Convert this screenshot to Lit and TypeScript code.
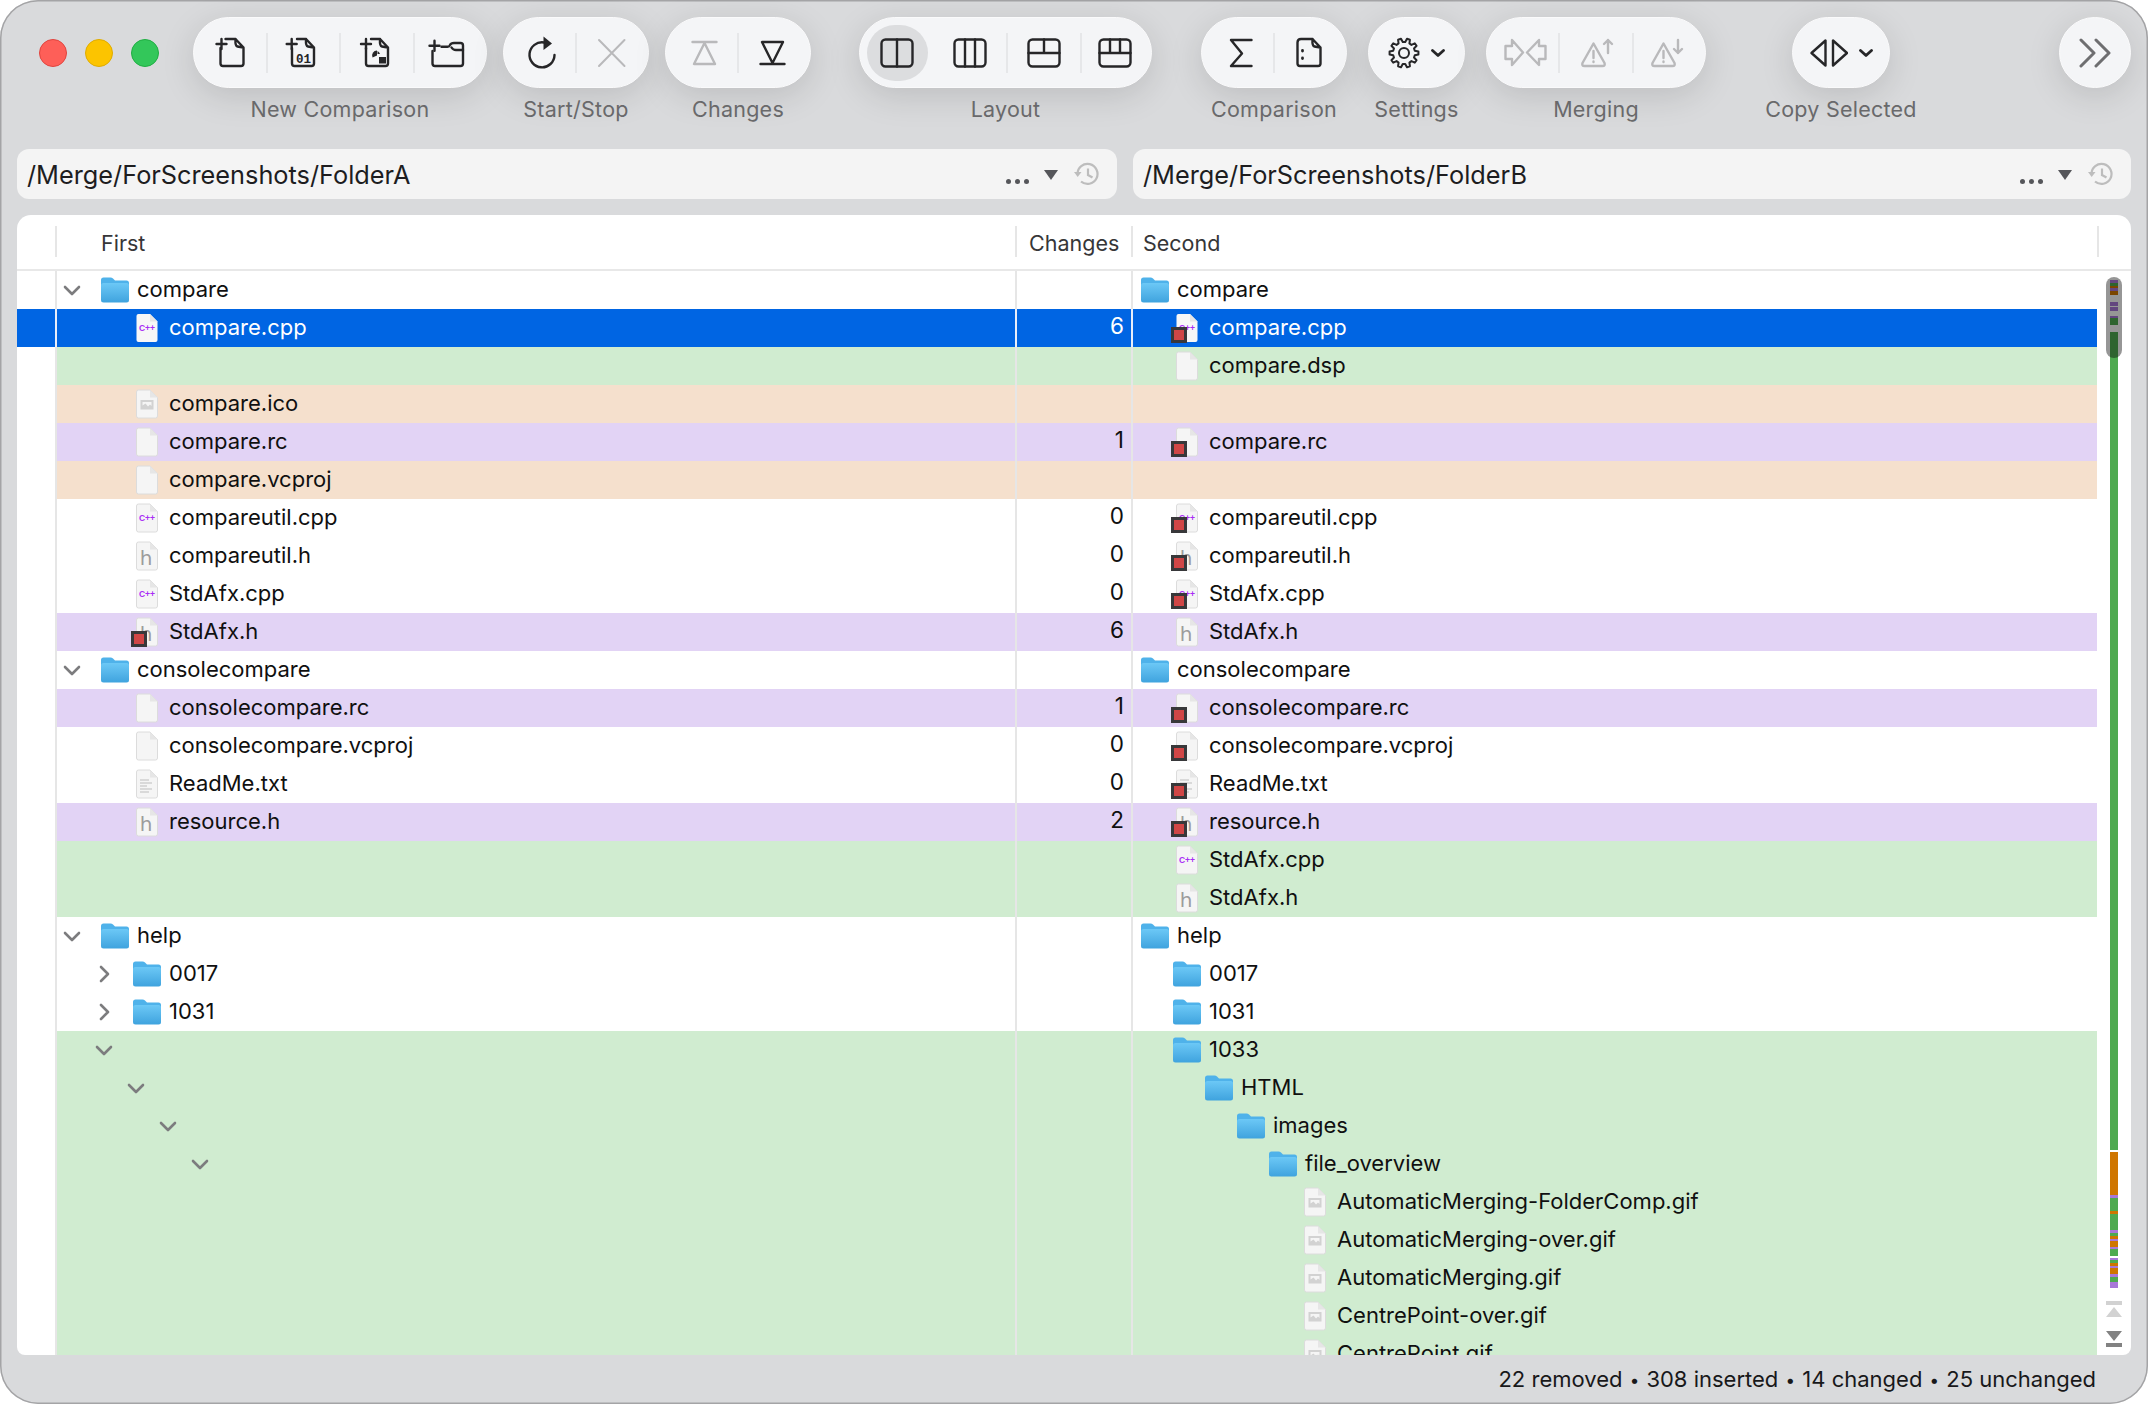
import { LitElement, html, svg, css } from 'lit';
import { customElement } from 'lit/decorators.js';

type Tint = '' | 'sel' | 'add' | 'del' | 'chg';
type Kind = 'folder' | 'cpp' | 'h' | 'img' | 'blank' | 'txt';

interface Side {
  name?: string;
  depth: number;
  kind?: Kind;
  badge?: boolean;
  chev?: 'down' | 'right';
}

interface Row {
  tint: Tint;
  left?: Side;
  count?: string;
  right?: Side;
}

const file = (name: string, kind: Kind, badge = false, depth = 1): Side => ({ name, kind, badge, depth });
const dir = (name: string, depth: number, chev?: 'down' | 'right'): Side => ({ name, kind: 'folder', depth, chev });

const rows: Row[] = [
  { tint: '', left: dir('compare', 0, 'down'), right: dir('compare', 0) },
  { tint: 'sel', left: file('compare.cpp', 'cpp'), count: '6', right: file('compare.cpp', 'cpp', true) },
  { tint: 'add', right: file('compare.dsp', 'blank') },
  { tint: 'del', left: file('compare.ico', 'img') },
  { tint: 'chg', left: file('compare.rc', 'blank'), count: '1', right: file('compare.rc', 'blank', true) },
  { tint: 'del', left: file('compare.vcproj', 'blank') },
  { tint: '', left: file('compareutil.cpp', 'cpp'), count: '0', right: file('compareutil.cpp', 'cpp', true) },
  { tint: '', left: file('compareutil.h', 'h'), count: '0', right: file('compareutil.h', 'h', true) },
  { tint: '', left: file('StdAfx.cpp', 'cpp'), count: '0', right: file('StdAfx.cpp', 'cpp', true) },
  { tint: 'chg', left: file('StdAfx.h', 'h', true), count: '6', right: file('StdAfx.h', 'h') },
  { tint: '', left: dir('consolecompare', 0, 'down'), right: dir('consolecompare', 0) },
  { tint: 'chg', left: file('consolecompare.rc', 'blank'), count: '1', right: file('consolecompare.rc', 'blank', true) },
  { tint: '', left: file('consolecompare.vcproj', 'blank'), count: '0', right: file('consolecompare.vcproj', 'blank', true) },
  { tint: '', left: file('ReadMe.txt', 'txt'), count: '0', right: file('ReadMe.txt', 'txt', true) },
  { tint: 'chg', left: file('resource.h', 'h'), count: '2', right: file('resource.h', 'h', true) },
  { tint: 'add', right: file('StdAfx.cpp', 'cpp') },
  { tint: 'add', right: file('StdAfx.h', 'h') },
  { tint: '', left: dir('help', 0, 'down'), right: dir('help', 0) },
  { tint: '', left: dir('0017', 1, 'right'), right: dir('0017', 1) },
  { tint: '', left: dir('1031', 1, 'right'), right: dir('1031', 1) },
  { tint: 'add', left: { depth: 1, chev: 'down' }, right: dir('1033', 1) },
  { tint: 'add', left: { depth: 2, chev: 'down' }, right: dir('HTML', 2) },
  { tint: 'add', left: { depth: 3, chev: 'down' }, right: dir('images', 3) },
  { tint: 'add', left: { depth: 4, chev: 'down' }, right: dir('file_overview', 4) },
  { tint: 'add', right: file('AutomaticMerging-FolderComp.gif', 'img', false, 5) },
  { tint: 'add', right: file('AutomaticMerging-over.gif', 'img', false, 5) },
  { tint: 'add', right: file('AutomaticMerging.gif', 'img', false, 5) },
  { tint: 'add', right: file('CentrePoint-over.gif', 'img', false, 5) },
  { tint: 'add', right: file('CentrePoint.gif', 'img', false, 5) },
];

// overview strip, heights in px from top of the strip
const strip: [string, number][] = [
  ['p', 3], ['g', 3], ['o', 2], ['p', 3], ['o', 4], ['', 7], ['p', 4], ['', 1], ['p', 4], ['', 5], ['p', 2], ['g', 7], ['', 7],
  ['g', 818], ['', 2], ['o', 43], ['p', 3], ['g', 13], ['o', 3], ['g', 16], ['p', 3], ['g', 3], ['o', 3], ['p', 2], ['o', 6],
  ['p', 2], ['g', 7], ['', 2], ['p', 2], ['g', 3], ['o', 3], ['p', 2], ['o', 6], ['p', 3], ['g', 5], ['p', 6],
];

const docPath = (l: number, r: number) =>
  `M${l} 15V30.5Q${l} 33 ${l + 2.5} 33H${r - 2.5}Q${r} 33 ${r} 30.5V14.500L${r - 8} 6H${l + 5}M${r - 8} 6Q${r - 8.500} 13 ${r - 6} 13.500T${r} 14.500`;
const plus = (x: number, y: number) => svg`<path d="M${x - 5} ${y}H${x + 5}M${x} ${y - 5}V${y + 5}" />`;

function gearPath(cx: number, cy: number, teeth: number, outer: number, inner: number) {
  let d = '';
  const step = (Math.PI * 2) / teeth;
  for (let i = 0; i < teeth; i++) {
    const a = i * step;
    const pts: [number, number][] = [
      [inner, a - step * 0.32],
      [outer, a - step * 0.17],
      [outer, a + step * 0.17],
      [inner, a + step * 0.32],
    ];
    pts.forEach(([r, t], j) => {
      const x = (cx + Math.cos(t) * r).toFixed(2);
      const y = (cy + Math.sin(t) * r).toFixed(2);
      d += `${i === 0 && j === 0 ? 'M' : 'L'}${x} ${y}`;
    });
  }
  return d + 'Z';
}

const warn = (x: number, flip: boolean) => svg`
  <g transform="translate(${x} 0)">
    <path d="M17.500 10.500L28.500 30Q29.500 33 26.500 33H8.500Q5.500 33 6.500 30Z" />
    <path d="M17.500 18V25M17.500 28.500V29" />
    ${flip
      ? svg`<path d="M32 7V20M28 16L32 20L36 16" />`
      : svg`<path d="M32 20V7M28 11L32 7L36 11" />`}
  </g>`;

const rect = svg`<rect x="4.500" y="6.500" width="31" height="27" rx="4" />`;

const icons: Record<string, unknown> = {
  newDoc: svg`<path d=${docPath(10.5, 33.5)} />${plus(11.5, 11)}`,
  newBin: svg`<path d=${docPath(9, 31)} />${plus(8.7, 11)}<text x="20.500" y="29.500" class="bits">01</text>`,
  newImg: svg`<path d=${docPath(9, 31)} />${plus(9, 11)}
    <path class="solid" stroke="none" d="M20 22.500V17.500A5 5 0 0 0 15.500 24.500Z" />
    <path class="solid" stroke="none" d="M20.500 18a5 5 0 0 1 2.500 3H20.500Z" />
    <rect class="solid" stroke="none" x="22" y="24" width="7" height="6.500" />`,
  newDir: svg`<path d="M2.500 18V30.500Q2.500 33 5 33H30.500Q33 33 33 30.500V12.500Q33 10 30.500 10H24Q21 10 20 12Q19.500 13.700 17.500 13.700H11.500" />
    <path d="M21.500 14.500Q23 17 26 17H33" />${plus(4.5, 12.7)}`,
  restart: svg`<path d="M24 9.500A12.500 12.500 0 1 0 34.500 22" /><path class="solid" stroke="none" d="M23.500 3.500L32 10.500L23.500 17Z" />`,
  stop: svg`<path class="thin" d="M6 7L31.500 33M31.500 7L6 33" />`,
  up: svg`<path d="M10.500 9H34.500M22.500 10L12 31H33Z" />`,
  down: svg`<path d="M5.500 31H29.500M17.500 30L7 9H28Z" />`,
  lay1: svg`${rect}<path d="M20 6.500V33.500" />`,
  lay2: svg`${rect}<path d="M15 6.500V33.500M25 6.500V33.500" />`,
  lay3: svg`${rect}<path d="M4.500 20H35.500M20 6.500V20" />`,
  lay4: svg`${rect}<path d="M4.500 20H35.500M15 6.500V20M25 6.500V20" />`,
  sigma: svg`<path d="M33.500 7H13L24 20.500L13 33H33.500" />`,
  docDots: svg`<path d="M6.500 9.500V30.500Q6.500 33 9 33H27Q29.500 33 29.500 30.500V14.500L21.500 6H10Q6.500 6 6.500 9.500ZM21.500 6Q21 13 23.500 13.500T29.500 14.500" />
    <path class="dot" d="M11.500 17.500V18M11.500 25V25.500" />`,
  merge: svg`<path d="M5.500 13H12V7L23 19.500L12 32V26H5.500Z M45.500 13H39V7L27 19.500L39 32V26H45.500Z" />`,
  warnUp: warn(0, false),
  warnDown: warn(-3, true),
};

const ctlChevron = html`<svg class="ctl-chev" viewBox="0 0 14 8"><path d="M1.500 1.500L7 6.500L12.500 1.500" /></svg>`;
const ic = (name: string, width = 40) =>
  html`<svg class="ic" width=${width} height="40" viewBox="0 0 ${width} 40">${icons[name]}</svg>`;

interface Group {
  label: string;
  width: number;
  cells: string[];
  off?: boolean[];
}

@customElement('tool-group')
class ToolGroup extends LitElement {
  static properties = { label: {}, width: { type: Number } };
  label = '';
  width = 0;

  static styles = css`
    :host { display: flex; flex-direction: column; align-items: center; }
    .pill {
      display: flex; align-items: center; height: 71px; box-sizing: border-box;
      border-radius: 36px; background: #f4f5f7; border: 1px solid #fafafb;
      box-shadow: 0 8px 34px rgba(0, 0, 0, 0.13);
    }
    .label {
      margin: 8px -30px 0; height: 26px; white-space: nowrap; letter-spacing: 0.25px;
      font: 21.5px/26px Inter, "Liberation Sans", sans-serif; color: #69696b;
    }
  `;

  render() {
    return html`
      <div class="pill" style="width:${this.width}px"><slot></slot></div>
      ${this.label ? html`<div class="label">${this.label}</div>` : ''}
    `;
  }
}

@customElement('path-field')
class PathField extends LitElement {
  static properties = { value: {} };
  value = '';

  static styles = css`
    :host {
      flex: 1; display: flex; align-items: center; height: 50px; border-radius: 12px;
      background: #f4f4f4; padding: 0 18px 0 10px; box-sizing: border-box;
      font: 25.3px Inter, "Liberation Sans", sans-serif; color: #1d1d1f;
    }
    .v { flex: 1; }
    .dots { display: flex; gap: 4px; margin-right: 15px; padding-top: 14px; }
    .dots i { width: 5px; height: 5px; border-radius: 50%; background: #55565a; }
    .tri { width: 14px; height: 10px; margin-right: 16px; margin-top: 2px; background: #55565a; clip-path: polygon(0 0, 100% 0, 50% 100%); }
    svg { display: block; fill: none; stroke: #bdbdbd; stroke-width: 2.2; }
  `;

  render() {
    return html`
      <span class="v">${this.value}</span>
      <span class="dots"><i></i><i></i><i></i></span>
      <span class="tri"></span>
      <svg width="25" height="24" viewBox="0 0 25 24">
        <path d="M3.500 12A10 10 0 1 1 7 19.500" />
        <path d="M14 6.500V13L18.500 15.500" />
        <path fill="#bdbdbd" stroke="none" d="M0 10H7.500L3.700 15Z" />
      </svg>
    `;
  }
}

@customElement('app-root')
export class AppRoot extends LitElement {
  static styles = css`
    :host { display: block; }
    .window {
      display: flex; flex-direction: column; height: 1404px; box-sizing: border-box; overflow: hidden;
      border-radius: 38px; background: #d9dadc; box-shadow: inset 0 0 0 1.5px #a4a4a6;
      font-family: Inter, "Liberation Sans", sans-serif;
    }

    /* toolbar */
    .toolbar { display: flex; height: 149px; box-sizing: border-box; padding: 17px 0 0 28px; }
    .lights { display: flex; gap: 18px; height: 71px; align-items: center; margin: 0 34px 0 11px; }
    .lights i { width: 28px; height: 28px; border-radius: 50%; box-sizing: border-box; }
    .r { background: #fe5f58; border: 1px solid #e0443e; }
    .y { background: #fcc400; border: 1px solid #e0ac00; }
    .g { background: #33c75a; border: 1px solid #1fae42; }
    .cluster { display: flex; gap: 16px; }
    .cluster.wide { gap: 21px; margin-left: 49px; }
    .lay { margin-left: 48px; }
    .copy { margin-left: 86px; }
    .more { margin-left: 169px; }

    .cell { flex: 1; display: flex; align-items: center; justify-content: center; gap: 11px; height: 100%; min-width: 0; }
    .cell.l1 { flex: none; width: 74px; }
    .cell.l2 { flex: none; width: 72px; }
    .cell.l3 { flex: none; width: 72px; }
    .cell.l4 { padding-right: 3px; }
    .on-bg { width: 61px; height: 56px; border-radius: 28px; background: #dcdddf; display: flex; align-items: center; justify-content: center; }
    .sep { width: 2px; height: 40px; background: #e6e7e9; flex: none; }
    .ic { display: block; overflow: visible; fill: none; stroke: #262628; stroke-width: 2.4; stroke-linejoin: round; stroke-linecap: round; flex: none; }
    .ic .solid { fill: #262628; }
    .ic .bits { font: bold 12.5px "Liberation Mono", monospace; fill: #262628; stroke: none; text-anchor: middle; }
    .ic .dot { stroke-width: 2.8; }
    .ic .thin { stroke-width: 2; }
    .off .ic { stroke: #b9b9bb; }
    .ctl-chev { display: block; width: 14px; height: 8px; fill: none; stroke: #262628; stroke-width: 2.8; stroke-linecap: round; stroke-linejoin: round; }
    .gear { display: block; fill: none; stroke: #262628; stroke-width: 2; stroke-linejoin: round; }
    .tris { display: block; fill: none; stroke: #262628; stroke-width: 2.4; stroke-linejoin: round; }
    .twin { display: block; fill: none; stroke: #6e6e70; stroke-width: 3; stroke-linecap: round; stroke-linejoin: round; }

    /* path fields */
    .paths { display: flex; gap: 16px; padding: 0 17px; }
    .paths .first { flex: none; width: 1100px; }

    /* table */
    .table {
      flex: 1; min-height: 0; margin: 16px 17px 0; display: flex; flex-direction: column;
      background: #fff; border-radius: 14px 14px 8px 8px; overflow: hidden;
    }
    .head {
      flex: none; height: 56px; box-sizing: border-box; display: grid; align-items: center;
      grid-template-columns: 38px 2px 958px 2px 114px 2px 964px 2px 1fr;
      font-size: 21.5px; color: #363638; border-bottom: 2px solid #e8e8e8;
      padding-bottom: 1px;
    }
    .head i { height: 31px; background: #e6e6e6; }
    .head span { padding-top: 2px; }
    .head span:nth-of-type(1) { padding-left: 44px; }
    .head span:nth-of-type(2) { padding-left: 12px; }
    .head span:nth-of-type(3) { padding-left: 10px; }
    .body { flex: 1; min-height: 0; display: flex; }
    .rows { flex: 1; min-width: 0; overflow: hidden; }
    .row {
      display: grid; height: 38px; grid-template-columns: 38px 2px 958px 2px 114px 2px 1fr;
      font-size: 22px; color: #101010;
    }
    .row > i { background: #e6e6e6; }
    .row.sel { color: #fff; }
    .row.sel > .gut { background: #0065e3; }
    .row.sel > i { background: #e8eefa; }
    .sel > .c { background: #0065e3; }
    .add > .c { background: #d0ecd0; }
    .del > .c { background: #f5e0cd; }
    .chg > .c { background: #e2d3f5; }
    .c { display: flex; align-items: center; white-space: nowrap; min-width: 0; }
    .name { margin-bottom: 2px; }
    .count { justify-content: flex-end; padding: 0 7px 5px 0; font-size: 22.5px; box-sizing: border-box; }
    .chev { width: 28px; flex: none; margin-right: 15px; display: flex; justify-content: center; }
    .chev svg { display: block; fill: none; stroke: #7c7c7e; stroke-width: 2.6; stroke-linecap: round; stroke-linejoin: round; }
    .slot { position: relative; width: 28px; height: 28px; flex: none; margin-right: 8px; display: flex; justify-content: center; align-items: center; }
    .badge {
      position: absolute; left: -2px; top: 13px; width: 16px; height: 16px; box-sizing: border-box;
      background: #d04646; border: 3px solid #38383a;
    }
    .page { display: block; flex: none; }
    .page .sheet { fill: #f5f5f5; stroke: #dcdcdc; stroke-width: 1; }
    .page .fold { fill: #e6e6e6; }
    .sel .page .sheet { fill: #f7f7f7; stroke: none; }
    .page .cpp { font: bold 8.5px "Liberation Sans", sans-serif; fill: #a92cf5; text-anchor: middle; }
    .page .hh { font: 20px "DejaVu Sans", sans-serif; fill: #9c9c9c; text-anchor: middle; }
    .page .pic { fill: #d2d2d2; }
    .page .line { stroke: #bdbdbd; stroke-width: 1; }

    /* overview */
    .side { flex: none; width: 34px; display: flex; flex-direction: column; align-items: center; padding-top: 9px; position: relative; }
    .strip { width: 8px; display: flex; flex-direction: column; }
    .strip b { display: block; }
    .strip .g { background: #4eaa50; border: 0; }
    .strip .o { background: #cf7600; }
    .strip .p { background: #a878d8; }
    .thumb { position: absolute; left: 9px; top: 6px; width: 16px; height: 81px; border-radius: 8px; background: rgba(0, 0, 0, 0.41); }
    .ends { margin-top: 13px; display: flex; flex-direction: column; gap: 14px; }
    .ends svg { display: block; }

    .status {
      flex: none; height: 49px; line-height: 49px; padding-right: 52px; text-align: right;
      font-size: 22px; color: #18181a;
    }
    .status b { font-weight: 400; font-size: 17px; margin: 0 1px; vertical-align: 1px; }
  `;

  private pageIcon(kind: Kind) {
    return html`<svg class="page" width="24" height="30" viewBox="0 0 24 30">
      <path class="sheet" d="M1.500 3Q1.500 1 3.500 1H15L22.500 8.500V27Q22.500 29 20.500 29H3.500Q1.500 29 1.500 27Z" />
      <path class="fold" d="M15 1L22.500 8.500H15Z" />
      ${kind === 'cpp' ? svg`<text class="cpp" x="12" y="18">C++</text>` : ''}
      ${kind === 'h' ? svg`<text class="hh" x="11" y="24">h</text>` : ''}
      ${kind === 'img'
        ? svg`<path class="pic" d="M5.500 11H18.500V20.500H5.500ZM7.500 13V16.500L10.500 14.500L13 17.500L15 15.500L16.500 17V13Z" fill-rule="evenodd" />`
        : ''}
      ${kind === 'txt'
        ? svg`<path class="line" d="M5 11H14M5 14H17M5 17H12M5 20H17M5 23H14" />`
        : ''}
    </svg>`;
  }

  private folderIcon() {
    return html`<svg class="page" width="28" height="26" viewBox="0 0 28 26">
      <defs>
        <linearGradient id="fg" x1="0" y1="0" x2="0" y2="1">
          <stop offset="0" stop-color="#6cc8f6" /><stop offset="1" stop-color="#3fa3de" />
        </linearGradient>
      </defs>
      <path fill="#4fb2ea" d="M0 3Q0 .5 2.500 .5H9.500Q11 .5 12 1.500L14 3.500H25.500Q28 3.500 28 6V10H0Z" />
      <path fill="url(#fg)" d="M0 8.500Q0 6 2.500 6H25.500Q28 6 28 8.500V23Q28 25.500 25.500 25.500H2.500Q0 25.500 0 23Z" />
    </svg>`;
  }

  private cell(side: Side | undefined, base: number, withChevrons: boolean) {
    if (!side) return html`<div class="c"></div>`;
    const pad = base + side.depth * 32;
    return html`<div class="c" style="padding-left:${pad}px">
      ${withChevrons
        ? html`<span class="chev">
            ${side.chev === 'down'
              ? html`<svg width="18" height="11" viewBox="0 0 18 11"><path d="M2 2L9 9L16 2" /></svg>`
              : side.chev === 'right'
                ? html`<svg width="11" height="18" viewBox="0 0 11 18"><path d="M2 2L9 9L2 16" /></svg>`
                : ''}
          </span>`
        : ''}
      ${side.kind
        ? html`<span class="slot">
            ${side.kind === 'folder' ? this.folderIcon() : this.pageIcon(side.kind)}
            ${side.badge ? html`<span class="badge"></span>` : ''}
          </span>`
        : ''}
      ${side.name ? html`<span class="name">${side.name}</span>` : ''}
    </div>`;
  }

  private group(g: Group) {
    return html`<tool-group .label=${g.label} .width=${g.width}>
      ${g.cells.map(
        (c, i) => html`
          ${i > 0 ? html`<span class="sep"></span>` : ''}
          <span class="cell ${g.off?.[i] ? 'off' : ''}">${ic(c, c === 'merge' ? 46 : 40)}</span>
        `,
      )}
    </tool-group>`;
  }

  render() {
    return html`
      <div class="window">
        <div class="toolbar">
          <div class="lights"><i class="r"></i><i class="y"></i><i class="g"></i></div>
          <div class="cluster">
            ${this.group({ label: 'New Comparison', width: 294, cells: ['newDoc', 'newBin', 'newImg', 'newDir'] })}
            ${this.group({ label: 'Start/Stop', width: 146, cells: ['restart', 'stop'], off: [false, true] })}
            ${this.group({ label: 'Changes', width: 146, cells: ['up', 'down'], off: [true, false] })}
          </div>
          <div class="lay">
            <tool-group .label=${'Layout'} .width=${293}>
              <span class="cell l1"><span class="on-bg">${ic('lay1')}</span></span>
              <span class="cell l2">${ic('lay2')}</span>
              <span class="sep"></span>
              <span class="cell l3">${ic('lay3')}</span>
              <span class="sep"></span>
              <span class="cell l4">${ic('lay4')}</span>
            </tool-group>
          </div>
          <div class="cluster wide">
            ${this.group({ label: 'Comparison', width: 146, cells: ['sigma', 'docDots'] })}
            <tool-group .label=${'Settings'} .width=${97}>
              <span class="cell">
                <svg class="gear" width="32" height="32" viewBox="0 0 32 32">
                  <path d=${gearPath(16, 16, 10, 14.5, 11)} /><circle cx="16" cy="16" r="5" />
                </svg>
                ${ctlChevron}
              </span>
            </tool-group>
            ${this.group({ label: 'Merging', width: 220, cells: ['merge', 'warnUp', 'warnDown'], off: [true, true, true] })}
          </div>
          <div class="copy">
            <tool-group .label=${'Copy Selected'} .width=${98}>
              <span class="cell">
                <svg class="tris" width="38" height="28" viewBox="0 0 38 28">
                  <path d="M15.500 1.500V26.500L1.500 14Z" /><path d="M23 1.500V26.500L37 14Z" />
                </svg>
                ${ctlChevron}
              </span>
            </tool-group>
          </div>
          <div class="more">
            <tool-group .width=${72}>
              <span class="cell">
                <svg class="twin" width="32" height="30" viewBox="0 0 32 30">
                  <path d="M2 2L15 15L2 28M17 2L30 15L17 28" />
                </svg>
              </span>
            </tool-group>
          </div>
        </div>

        <div class="paths">
          <path-field class="first" .value=${'/Merge/ForScreenshots/FolderA'}></path-field>
          <path-field .value=${'/Merge/ForScreenshots/FolderB'}></path-field>
        </div>

        <div class="table">
          <div class="head">
            <div></div><i></i><span>First</span><i></i><span>Changes</span><i></i><span>Second</span><i></i><div></div>
          </div>
          <div class="body">
            <div class="rows">
              ${rows.map(
                (r) => html`<div class="row ${r.tint}">
                  <div class="gut"></div><i></i>
                  ${this.cell(r.left, 1, true)}
                  <i></i>
                  <div class="c count">${r.count ?? ''}</div>
                  <i></i>
                  ${this.cell(r.right, 8, false)}
                </div>`,
              )}
            </div>
            <div class="side">
              <div class="strip">
                ${strip.map(([cls, h]) => html`<b class=${cls} style="height:${h}px"></b>`)}
              </div>
              <div class="thumb"></div>
              <div class="ends">
                <svg width="16" height="16" viewBox="0 0 16 16" fill="#d2d2d2"><path d="M0 0H16V4H0ZM8 6L16 16H0Z" /></svg>
                <svg width="16" height="16" viewBox="0 0 16 16" fill="#828282"><path d="M0 0H16L8 10ZM0 12H16V16H0Z" /></svg>
              </div>
            </div>
          </div>
        </div>

        <div class="status">22 removed <b>•</b> 308 inserted <b>•</b> 14 changed <b>•</b> 25 unchanged</div>
      </div>
    `;
  }
}
